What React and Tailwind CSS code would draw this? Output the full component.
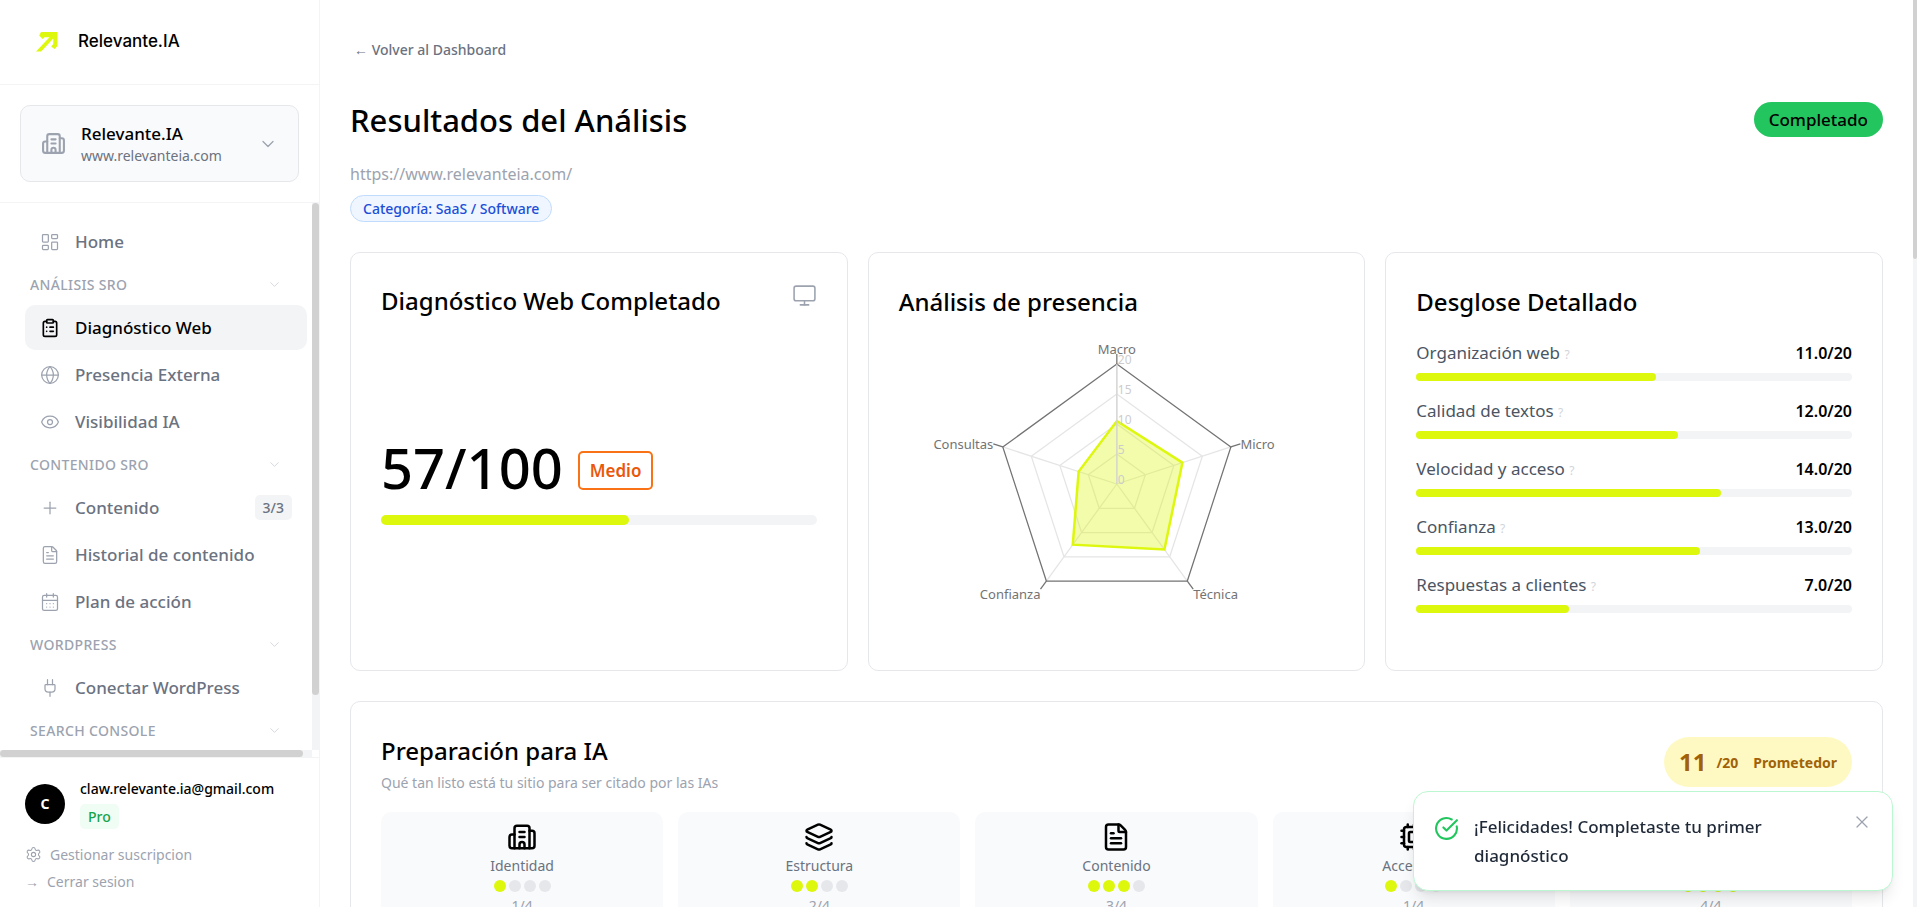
import React, { useState } from 'react';
import {
  Building2,
  CalendarDays,
  ChevronDown,
  CircleCheckBig,
  ClipboardList,
  Cpu,
  Eye,
  FileText,
  Globe,
  Layers,
  LayoutDashboard,
  Monitor,
  Plug,
  Plus,
  Settings,
  ShieldCheck,
  X,
} from 'lucide-react';

const navGroups = [
  { title: null, items: [{ label: 'Home', icon: LayoutDashboard }] },
  {
    title: 'ANÁLISIS SRO',
    items: [
      { label: 'Diagnóstico Web', icon: ClipboardList, active: true },
      { label: 'Presencia Externa', icon: Globe },
      { label: 'Visibilidad IA', icon: Eye },
    ],
  },
  {
    title: 'CONTENIDO SRO',
    items: [
      { label: 'Contenido', icon: Plus, badge: '3/3' },
      { label: 'Historial de contenido', icon: FileText },
      { label: 'Plan de acción', icon: CalendarDays },
    ],
  },
  { title: 'WORDPRESS', items: [{ label: 'Conectar WordPress', icon: Plug }] },
  { title: 'SEARCH CONSOLE', items: [] },
];

const breakdown = [
  { label: 'Organización web', score: 11 },
  { label: 'Calidad de textos', score: 12 },
  { label: 'Velocidad y acceso', score: 14 },
  { label: 'Confianza', score: 13 },
  { label: 'Respuestas a clientes', score: 7 },
];

const readiness = [
  { label: 'Identidad', icon: Building2, score: 1 },
  { label: 'Estructura', icon: Layers, score: 2 },
  { label: 'Contenido', icon: FileText, score: 3 },
  { label: 'Acceso IA', icon: Cpu, score: 1 },
  { label: 'Confianza', icon: ShieldCheck, score: 4 },
];

const radarData = [
  { label: 'Macro', value: 10.5, anchor: 'middle', labelShift: 0 },
  { label: 'Micro', value: 11.5, anchor: 'start', labelShift: 5 },
  { label: 'Técnica', value: 13.5, anchor: 'start', labelShift: 10 },
  { label: 'Confianza', value: 12.5, anchor: 'end', labelShift: 10 },
  { label: 'Consultas', value: 6.7, anchor: 'end', labelShift: 5 },
];

const CENTER_X = 218;
const CENTER_Y = 151;
const RADIUS = 120;

function polar(index, radius) {
  const angle = (Math.PI * 2 * index) / radarData.length - Math.PI / 2;
  return [CENTER_X + radius * Math.cos(angle), CENTER_Y + radius * Math.sin(angle)];
}

function ring(radius) {
  return radarData.map((_, i) => polar(i, radius).join(',')).join(' ');
}

function RadarChart() {
  const shape = radarData.map((d, i) => polar(i, (d.value / 20) * RADIUS).join(',')).join(' ');

  return (
    <svg viewBox="0 0 436 307" className="mx-auto h-[307px] w-full" role="img" aria-label="Análisis de presencia">
      {[5, 10, 15].map((v) => (
        <polygon key={v} points={ring((v / 20) * RADIUS)} fill="none" stroke="#e5e5e5" strokeWidth="1.25" />
      ))}
      {radarData.map((d, i) => {
        const [x, y] = polar(i, RADIUS);
        return <line key={d.label} x1={CENTER_X} y1={CENTER_Y} x2={x} y2={y} stroke="#e5e5e5" strokeWidth="1.25" />;
      })}
      <polygon points={ring(RADIUS)} fill="none" stroke="#737373" strokeWidth="1.25" />
      {radarData.map((d, i) => {
        const [x1, y1] = polar(i, RADIUS);
        const [x2, y2] = polar(i, RADIUS + 10);
        return (
          <g key={d.label}>
            <line x1={x1} y1={y1} x2={x2} y2={y2} stroke="#737373" strokeWidth="1.25" />
            <text x={x2} y={y2 + d.labelShift} textAnchor={d.anchor} fill="#737373" fontSize="13">
              {d.label}
            </text>
          </g>
        );
      })}
      <polygon points={shape} fill="#DDF70D" fillOpacity="0.35" stroke="#DDF70D" strokeWidth="2.5" />
      <line x1={CENTER_X} y1={CENTER_Y} x2={CENTER_X} y2={CENTER_Y - RADIUS} stroke="#d4d4d4" strokeWidth="1.25" />
      {[0, 5, 10, 15, 20].map((v) => (
        <text key={v} x={CENTER_X + 1} y={CENTER_Y - (v / 20) * RADIUS} fill="#cccccc" fontSize="12">
          {v}
        </text>
      ))}
    </svg>
  );
}

function Logo() {
  return (
    <svg viewBox="0 0 22 20" className="h-5 w-[22px]" fill="#DDF70D" aria-hidden="true">
      <path d="M5 0H21.500V14L18.500 17L15.200 14.500L17.300 12V6.500L5.200 19.500H0L13.500 5.200H8.500L6.500 7L3.200 3.600Z" />
    </svg>
  );
}

function Sidebar() {
  return (
    <aside className="flex w-80 shrink-0 flex-col border-r border-[#f3f4f6]">
      <div className="flex h-[85px] shrink-0 items-center gap-5 border-b border-[#f3f4f6] px-9">
        <Logo />
        <span className="font-['Inter'] text-[17px] font-medium text-black">Relevante.IA</span>
      </div>

      <div className="shrink-0 border-b border-[#f3f4f6] p-5">
        <button className="flex h-[77px] w-full items-center gap-[15px] rounded-[10px] border border-[#e5e7eb] bg-[#f9fafb] px-5 text-left">
          <Building2 size={25} className="shrink-0 text-[#9ca3af]" />
          <span className="flex-1">
            <span className="block text-[17px] leading-6 font-medium text-black">Relevante.IA</span>
            <span className="block text-[14px] leading-5 text-[#6b7280]">www.relevanteia.com</span>
          </span>
          <ChevronDown size={20} strokeWidth={1.5} className="text-[#9ca3af]" />
        </button>
      </div>

      <div className="flex min-h-0 flex-1">
        <nav className="min-w-0 flex-1 overflow-hidden pt-4 pr-[5px] pl-[25px]">
          {navGroups.map((group) => (
            <div key={group.title || 'main'}>
              {group.title && (
                <button className="flex h-[41px] w-full items-center justify-between pr-[25px] pl-[5px] text-[#9ca3af]">
                  <span className="text-[14px] font-medium tracking-wide">{group.title}</span>
                  <ChevronDown size={15} strokeWidth={1.5} className="text-[#d1d5db]" />
                </button>
              )}
              <div className="flex flex-col gap-0.5">
                {group.items.map(({ label, icon: Icon, active, badge }) => (
                  <a
                    key={label}
                    href="#"
                    className={`flex h-[45px] items-center gap-[15px] rounded-[10px] px-[15px] text-[17px] font-medium ${active ? 'bg-[#f3f4f6] text-black' : 'text-[#6b7280]'}`}
                  >
                    <Icon size={20} strokeWidth={active ? 2 : 1.5} className={active ? 'text-black' : 'text-[#9ca3af]'} />
                    <span className="flex-1">{label}</span>
                    {badge && (
                      <span className="rounded-[5px] bg-[#f3f4f6] px-2 text-[14px] leading-[25px] font-medium">{badge}</span>
                    )}
                  </a>
                ))}
              </div>
            </div>
          ))}
        </nav>
        <div className="w-[7px] bg-[#f3f4f6]">
          <div className="h-[90%] rounded-full bg-[#d1d1d1]" />
        </div>
      </div>
      <div className="mr-[7px] h-[7px] shrink-0 bg-[#f3f4f6]">
        <div className="h-full w-[97%] rounded-full bg-[#d1d1d1]" />
      </div>

      <div className="shrink-0 border-t border-[#f3f4f6] px-[25px] pt-5 pb-3">
        <div className="flex items-center gap-[15px]">
          <div className="flex size-10 items-center justify-center rounded-full bg-black text-[14px] font-bold text-white">C</div>
          <div>
            <p className="text-[14px] leading-[22px] font-medium text-black">claw.relevante.ia@gmail.com</p>
            <span className="mt-1 inline-block rounded-[5px] bg-[#f0fdf4] px-2 text-[14px] leading-[25px] font-medium text-[#16a34a]">
              Pro
            </span>
          </div>
        </div>
        <a href="#" className="mt-3 flex items-center gap-2 text-[14px] leading-[27px] text-[#9ca3af]">
          <Settings size={17} strokeWidth={1.5} />
          Gestionar suscripcion
        </a>
        <button className="flex items-center gap-2 text-[14px] leading-[27px] text-[#9ca3af]">
          <span>→</span>
          <span>Cerrar sesion</span>
        </button>
      </div>
    </aside>
  );
}

function ScoreCard() {
  return (
    <section className="flex flex-col rounded-[10px] border border-[#e5e7eb] p-[30px]">
      <div className="flex items-start justify-between">
        <h2 className="text-[24px] leading-9 font-medium text-black">Diagnóstico Web Completado</h2>
        <Monitor size={25} strokeWidth={1.5} className="text-[#9ca3af]" />
      </div>
      <div className="flex flex-1 flex-col justify-center">
        <div className="flex items-center gap-[15px]">
          <span className="pb-2 text-[56px] leading-[64px] font-medium text-black">57/100</span>
          <span className="rounded-[5px] border-2 border-[#f97316] px-2.5 text-[17px] leading-[35px] font-semibold text-[#ea580c]">
            Medio
          </span>
        </div>
        <div className="mt-2 h-2.5 rounded-full bg-[#f3f4f6]">
          <div className="h-full w-[57%] rounded-full bg-[#DDF70D]" />
        </div>
      </div>
    </section>
  );
}

function BreakdownCard() {
  return (
    <section className="rounded-[10px] border border-[#e5e7eb] p-[30px]">
      <h2 className="text-[24px] leading-[38px] font-medium text-black">Desglose Detallado</h2>
      <div className="mt-[19px] flex flex-col gap-[17px]">
        {breakdown.map((item) => (
          <div key={item.label}>
            <div className="flex h-[25px] items-center justify-between text-[17px]">
              <span className="text-[#4b5563]">
                {item.label} <span className="text-[12px] text-[#d1d5db]">?</span>
              </span>
              <span className="text-[16px] font-semibold text-black">{item.score.toFixed(1)}/20</span>
            </div>
            <div className="mt-2 h-2 rounded-full bg-[#f3f4f6]">
              <div className="h-full rounded-full bg-[#DDF70D]" style={{ width: `${(item.score / 20) * 100}%` }} />
            </div>
          </div>
        ))}
      </div>
    </section>
  );
}

function ReadinessCard() {
  return (
    <section className="mt-[30px] rounded-[10px] border border-[#e5e7eb] p-[30px]">
      <div className="flex items-start justify-between">
        <div>
          <h2 className="text-[24px] leading-[38px] font-medium text-black">Preparación para IA</h2>
          <p className="text-[14px] leading-[25px] text-[#9ca3af]">Qué tan listo está tu sitio para ser citado por las IAs</p>
        </div>
        <div className="mt-[5px] flex h-[50px] items-center rounded-full bg-[#fef9c3] px-[15px] font-bold text-[#a16207]">
          <span className="text-[24px]">11</span>
          <span className="ml-2.5 text-[14px]">/20</span>
          <span className="ml-[15px] text-[14px]">Prometedor</span>
        </div>
      </div>
      <div className="mt-[17px] grid grid-cols-5 gap-[15px]">
        {readiness.map(({ label, icon: Icon, score }) => (
          <div key={label} className="flex flex-col items-center rounded-[10px] bg-[#f9fafb] p-2.5">
            <Icon size={30} className="text-black" />
            <p className="mt-1 text-[14px] leading-5 text-[#6b7280]">{label}</p>
            <div className="mt-1 flex gap-[3px]">
              {[1, 2, 3, 4].map((n) => (
                <span key={n} className={`size-3 rounded-full ${n <= score ? 'bg-[#DDF70D]' : 'bg-[#e5e7eb]'}`} />
              ))}
            </div>
            <p className="mt-1 text-[14px] leading-5 text-[#9ca3af]">{score}/4</p>
          </div>
        ))}
      </div>
    </section>
  );
}

function Toast({ onClose }) {
  return (
    <div
      role="status"
      className="fixed right-6 bottom-4 flex w-[480px] items-start gap-[15px] rounded-[15px] border border-[#bbf7d0] bg-white p-5 shadow-lg"
    >
      <CircleCheckBig size={25} strokeWidth={2} className="mt-1 shrink-0 text-[#22c55e]" />
      <p className="flex-1 pr-12 text-[17px] leading-[29px] font-medium text-[#1f2937]">
        ¡Felicidades! Completaste tu primer diagnóstico
      </p>
      <button onClick={onClose} aria-label="Cerrar" className="text-[#9ca3af]">
        <X size={20} strokeWidth={1.5} />
      </button>
    </div>
  );
}

export default function App() {
  const [showToast, setShowToast] = useState(true);

  return (
    <div className="flex h-screen overflow-hidden bg-white font-['Noto_Sans',sans-serif]">
      <Sidebar />

      <main className="min-w-0 flex-1 overflow-hidden px-[30px] pt-[30px]">
        <a href="#" className="inline-flex h-[38px] items-center px-1 text-[14px] font-medium text-[#6b7280]">
          ← Volver al Dashboard
        </a>

        <header className="mt-[22px] flex items-start justify-between">
          <div>
            <h1 className="text-[31px] leading-[60px] font-medium text-black">Resultados del Análisis</h1>
            <p className="mt-2.5 text-[16px] leading-7 text-[#9ca3af]">https://www.relevanteia.com/</p>
            <span className="mt-[7px] inline-block rounded-full border border-[#bfdbfe] bg-[#eff6ff] px-3 text-[14px] leading-[25px] font-medium text-[#1d4ed8]">
              Categoría: SaaS / Software
            </span>
          </div>
          <span className="mt-3 rounded-full bg-[#22c55e] px-[15px] text-[17px] leading-[35px] font-medium text-black">
            Completado
          </span>
        </header>

        <div className="mt-[30px] grid grid-cols-3 gap-5">
          <ScoreCard />
          <section className="rounded-[10px] border border-[#e5e7eb] p-[30px]">
            <h2 className="text-[24px] leading-[38px] font-medium text-black">Análisis de presencia</h2>
            <div className="mt-3">
              <RadarChart />
            </div>
          </section>
          <BreakdownCard />
        </div>

        <ReadinessCard />
      </main>

      <div className="w-1 shrink-0 bg-[#f3f4f6]">
        <div className="h-[259px] rounded-b bg-[#d1d1d1]" />
      </div>

      {showToast && <Toast onClose={() => setShowToast(false)} />}
    </div>
  );
}
